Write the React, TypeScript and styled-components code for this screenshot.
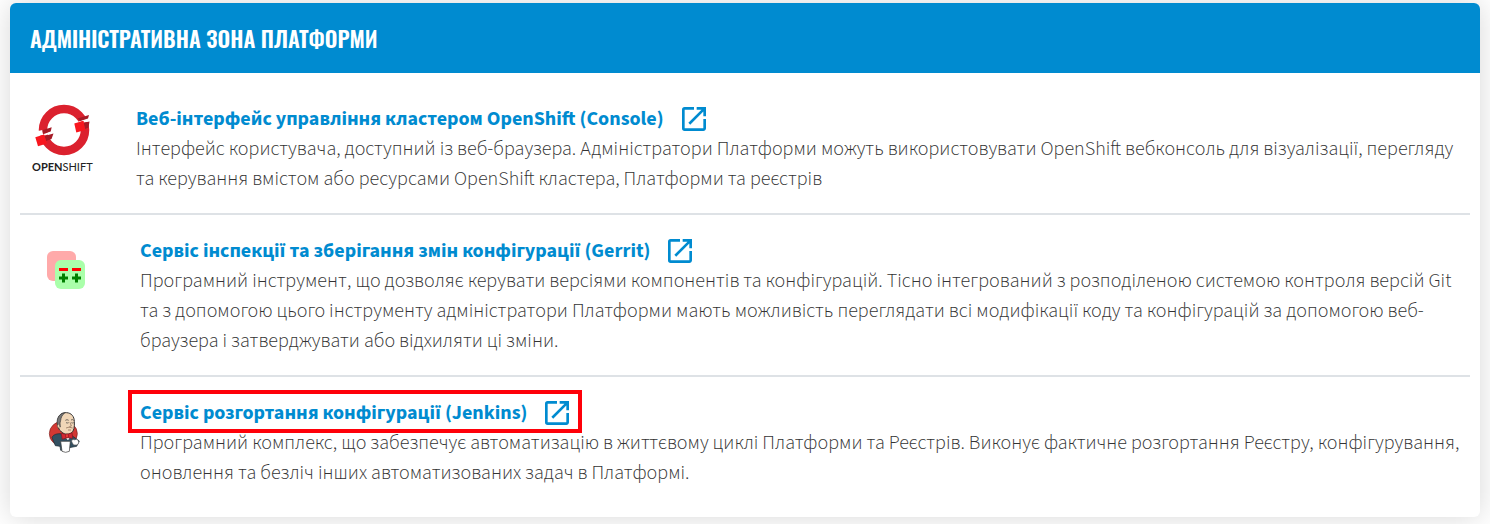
import React from 'react';
import styled, { createGlobalStyle } from 'styled-components';

const GlobalStyle = createGlobalStyle`
  *, *::before, *::after { box-sizing: border-box; }
  body { margin: 0; background: #fff; font-family: "Source Sans 3", "Noto Sans", "Open Sans", sans-serif; }
`;

const Page = styled.main`
  padding: 3px 10px 7px;
`;

const Card = styled.section`
  border-radius: 6px;
  background: #fff;
  box-shadow: 0 0 30px rgba(0, 0, 0, 0.16);
`;

const CardHeader = styled.header`
  display: flex;
  align-items: center;
  min-height: 70px;
  padding: 0 20px;
  border-radius: 6px 6px 0 0;
  background: #008bd0;
`;

const CardTitle = styled.h2`
  margin: 0;
  color: #fff;
  font: 600 22px/32px Oswald, "Roboto Condensed", sans-serif;
  text-transform: uppercase;
`;

const ServiceList = styled.ul`
  margin: 0;
  padding: 10px;
  list-style: none;
`;

const ServiceRow = styled.li`
  display: flex;
  align-items: flex-start;
  padding: 21px 10px 19px 0;

  & + & { border-top: 2px solid #dee2e6; }
`;

const LogoCell = styled.div<{ $width: number }>`
  display: flex;
  flex: 0 0 ${(p) => p.$width}px;
  padding-left: 10px;

  svg { display: block; }
`;

const ServiceBody = styled.div`
  flex: 1;
  min-width: 0;
`;

const ServiceLink = styled.a`
  position: relative;
  display: inline-flex;
  align-items: center;
  gap: 18px;
  color: #008bd0;
  font-size: 20px;
  line-height: 30px;
  font-weight: 700;
  text-decoration: none;
  vertical-align: top;

  svg { flex: none; }
`;

const Highlight = styled.span`
  position: absolute;
  inset: -8px -13px -5px -12px;
  border: 4px solid #ff0009;
  pointer-events: none;
`;

const Description = styled.p`
  margin: 0;
  color: #333;
  font-size: 20px;
  line-height: 30px;
  font-weight: 300;
`;

function OpenIcon() {
  return (
    <svg width="24" height="24" viewBox="3 3 18 18" fill="currentColor" aria-hidden="true">
      <path d="M19 19H5V5h7V3H5a2 2 0 0 0-2 2v14a2 2 0 0 0 2 2h14c1.1 0 2-.9 2-2v-7h-2v7zM14 3v2h3.59l-9.83 9.83 1.41 1.41L19 6.41V10h2V3h-7z" />
    </svg>
  );
}

function OpenShiftLogo() {
  return (
    <svg width="68" height="72" viewBox="0 1 68 72" role="img" aria-label="OpenShift">
      <circle cx="34" cy="27" r="21" fill="none" stroke="#db212e" strokeWidth="8.5" />
      <path d="M50 18 60 14V18.5L53.5 19.500V18L45 20.500ZM8 28 12.500 27 13 31 22 28.500 22 30.500 14.500 32.500 14 31.500 5 34.500Z" fill="#fff" />
      <path d="M47.500 15.500 59 12 58 15.500 50 18ZM12.300 27.200 21.700 24.300 20.700 28.500 13 31Z" fill="#a61b26" />
      <path d="M53.500 20 59.500 18.500 58.500 24.500 55 26ZM14.500 33 23.500 30.500 21.500 36 16 38Z" fill="#a61b26" />
      <path d="M44.300 20.500 53.300 17.800 55.300 27 46.300 29.500ZM5.300 34.300 14 31.500 17 40.500 8 43.300Z" fill="#f8161e" />
      <text x="2" y="68" fontFamily="Lato" fontSize="11" fontWeight="700" fill="#222">OPEN<tspan fontWeight="400">SHIFT</tspan></text>
    </svg>
  );
}

function GerritLogo() {
  return (
    <svg width="72" height="72" viewBox="0 1 72 72" role="img" aria-label="Gerrit">
      <rect x="17" y="16" width="29" height="30" rx="6" fill="#faa" />
      <rect x="25" y="25" width="30" height="29" rx="6" fill="#afa" />
      <path d="M29 34.500H38M42 34.500H51" stroke="red" strokeWidth="3" />
      <path d="M29 43H38M33.500 38.500V47.500M42 43H51M46.500 38.500V47.500" stroke="green" strokeWidth="3" />
    </svg>
  );
}

function JenkinsLogo() {
  return (
    <svg width="72" height="72" viewBox="-30 -21 216 216" strokeLinejoin="round" role="img" aria-label="Jenkins">
      <ellipse cx="70" cy="86" rx="42" ry="38" fill="#d33833" stroke="#7c1f1c" strokeWidth="2" />
      <path d="M36 98C38 90 48 86 60 86L96 92 118 108 110 124 88 128 84 136H62L60 124 46 122Z" fill="#335061" stroke="#1d2b33" strokeWidth="2" />
      <path d="M54 46C54 30 66 22 80 23 94 24 103 34 103 50 104 66 102 78 94 84 84 91 70 88 62 78 54 72 50 58 54 46Z" fill="#f0d6b7" stroke="#333" strokeWidth="3" />
      <path d="M55 66C47 52 52 30 68 25L74 24C66 30 63 38 62 46L60 54 61 66Z" fill="#777" stroke="#333" strokeWidth="2" />
      <path d="M56 58C50 60 52 70 60 70" fill="#f0d6b7" stroke="#8a6650" strokeWidth="2" />
      <path d="M76 46Q81 42 86 46M93 45Q97 42 101 46M78 53Q82 55 86 53M94 53Q97 55 101 53" fill="none" stroke="#333" strokeWidth="2" />
      <path d="M90 52 94 63 88 65M78 69Q86 64 98 69M84 75H93" fill="none" stroke="#80604c" strokeWidth="2" />
      <path d="M68 88 84 106 94 91 80 90Z" fill="#fff" />
      <path d="M63 84 79 89 96 83 98 100 82 98 67 103Z" fill="#d32632" stroke="#801820" strokeWidth="2" />
      <rect x="77" y="87" width="8" height="11" rx="2" fill="#ef3d3a" stroke="#801820" strokeWidth="2" />
      <path d="M96 112C92 104 100 102 105 105 110 99 116 106 116 113 116 120 106 122 100 119Z" fill="#fff" stroke="#555" strokeWidth="2" />
      <path d="M62 109H91L88 139Q77 145 66 139Z" fill="#fff" stroke="#333" strokeWidth="2" />
    </svg>
  );
}

type Service = { title: string; text: string; logo: React.ReactNode; logoWidth: number; highlighted?: boolean };

const services: Service[] = [
  {
    title: 'Веб-інтерфейс управління кластером OpenShift (Console)',
    text: 'Інтерфейс користувача, доступний із веб-браузера. Адміністратори Платформи можуть використовувати OpenShift вебконсоль для візуалізації, перегляду та керування вмістом або ресурсами OpenShift кластера, Платформи та реєстрів',
    logo: <OpenShiftLogo />,
    logoWidth: 116,
  },
  {
    title: 'Сервіс інспекції та зберігання змін конфігурації (Gerrit)',
    text: 'Програмний інструмент, що дозволяє керувати версіями компонентів та конфігурацій. Тісно інтегрований з розподіленою системою контроля версій Git та з допомогою цього інструменту адміністратори Платформи мають можливість переглядати всі модифікації коду та конфігурацій за допомогою веб-браузера і затверджувати або відхиляти ці зміни.',
    logo: <GerritLogo />,
    logoWidth: 120,
  },
  {
    title: 'Сервіс розгортання конфігурації (Jenkins)',
    text: 'Програмний комплекс, що забезпечує автоматизацію в життєвому циклі Платформи та Реєстрів. Виконує фактичне розгортання Реєстру, конфігурування, оновлення та безліч інших автоматизованих задач в Платформі.',
    logo: <JenkinsLogo />,
    logoWidth: 120,
    highlighted: true,
  },
];

export default function App() {
  return (
    <Page>
      <GlobalStyle />
      <Card>
        <CardHeader>
          <CardTitle>Адміністративна зона платформи</CardTitle>
        </CardHeader>
        <ServiceList>
          {services.map((s) => (
            <ServiceRow key={s.title}>
              <LogoCell $width={s.logoWidth}>{s.logo}</LogoCell>
              <ServiceBody>
                <ServiceLink href="#">
                  {s.title}
                  <OpenIcon />
                  {s.highlighted && <Highlight />}
                </ServiceLink>
                <Description>{s.text}</Description>
              </ServiceBody>
            </ServiceRow>
          ))}
        </ServiceList>
      </Card>
    </Page>
  );
}
